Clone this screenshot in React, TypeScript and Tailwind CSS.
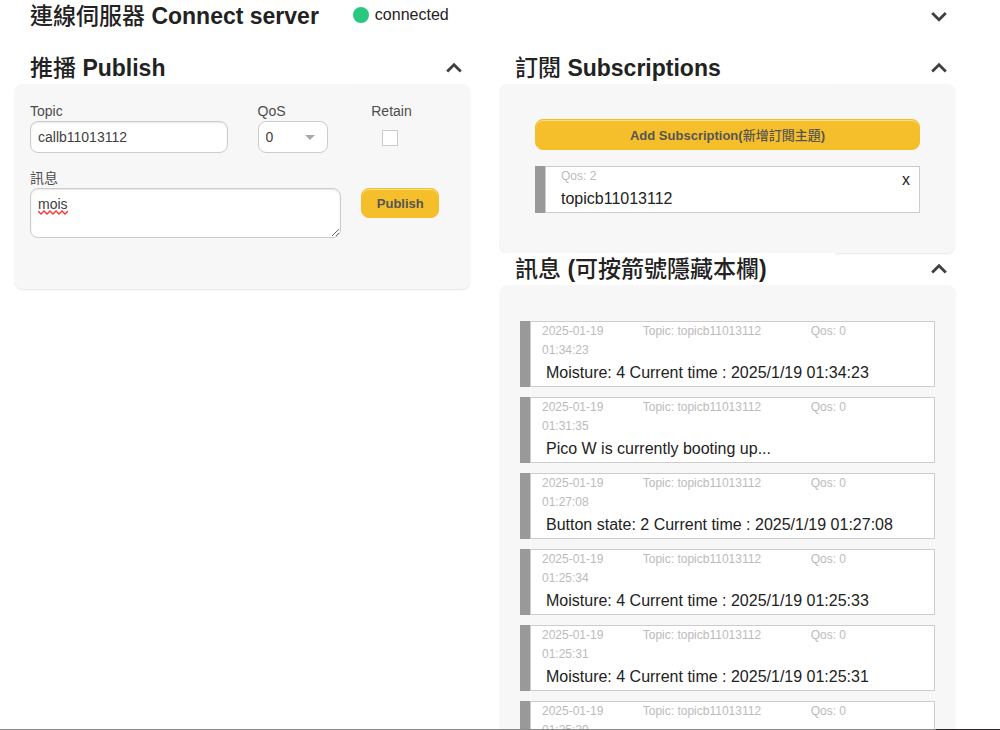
import { useState, type ReactNode } from "react";

interface Message {
  time: string;
  text: string;
}

const messages: Message[] = [
  { time: "01:34:23", text: "Moisture: 4 Current time : 2025/1/19 01:34:23" },
  { time: "01:31:35", text: "Pico W is currently booting up..." },
  { time: "01:27:08", text: "Button state: 2 Current time : 2025/1/19 01:27:08" },
  { time: "01:25:34", text: "Moisture: 4 Current time : 2025/1/19 01:25:33" },
  { time: "01:25:31", text: "Moisture: 4 Current time : 2025/1/19 01:25:31" },
  { time: "01:25:29", text: "Moisture: 4 Current time : 2025/1/19 01:25:28" },
];

function Han({ children }: { children: ReactNode }) {
  return <span className="font-medium">{children}</span>;
}

function Heading({ children }: { children: ReactNode }) {
  return <h2 className="text-[23px] leading-8 font-bold text-[#222]">{children}</h2>;
}

function Chevron({ up, label, onClick }: { up: boolean; label: string; onClick: () => void }) {
  return (
    <button type="button" aria-label={label} aria-expanded={up} onClick={onClick} className="cursor-pointer text-[#404040]">
      <svg width="16" height="16" viewBox="0 0 16 16" fill="none" stroke="currentColor" strokeWidth="2.8" className="block">
        <path d={up ? "M1.2 11.6 8 4.8 14.8 11.6" : "M1.2 4.9 8 11.7 14.8 4.9"} />
      </svg>
    </button>
  );
}

interface SectionProps {
  name: string;
  title: ReactNode;
  className: string;
  children: ReactNode;
}

function Section({ name, title, className, children }: SectionProps) {
  const [open, setOpen] = useState(true);
  return (
    <section>
      <div className="flex items-center justify-between pr-2">
        <div className="relative w-3/4 bg-white pl-[15px]">
          <Heading>{title}</Heading>
        </div>
        <Chevron up={open} label={name} onClick={() => setOpen(!open)} />
      </div>
      {open && (
        <div className={`rounded-lg bg-[#f7f7f7] shadow-[0_1px_2px_rgba(0,0,0,0.1)] ${className}`}>{children}</div>
      )}
    </section>
  );
}

const label = "block text-sm leading-5 text-[#4d4d4d]";
const field = "block w-full rounded-lg border border-[#ccc] bg-white px-[7px] text-sm text-[#404040]";
const button =
  "cursor-pointer rounded-lg border border-[#f5bd27] bg-[#f5bf2b] pt-0.5 text-[13px] font-bold text-[#555] shadow-[inset_0_1px_0_rgba(255,255,255,0.5)]";

function PublishForm() {
  return (
    <form className="pt-[17px] pb-[51px]" onSubmit={(e) => e.preventDefault()}>
      <div className="grid grid-cols-4">
        <div className="col-span-2 px-[15px]">
          <label htmlFor="topic" className={label}>Topic</label>
          <input
            id="topic"
            type="text"
            defaultValue="callb11013112"
            className={`${field} h-8 shadow-[inset_0_1px_2px_rgba(0,0,0,0.1)]`}
          />
        </div>
        <div className="px-[15px]">
          <label htmlFor="qos" className={label}>QoS</label>
          <div className="relative w-[70px]">
            <select id="qos" defaultValue="0" className={`${field} h-8 appearance-none`}>
              <option>0</option>
              <option>1</option>
              <option>2</option>
            </select>
            <svg width="10" height="5" viewBox="0 0 10 5" className="pointer-events-none absolute top-3.5 right-[13px] fill-[#aaa]">
              <path d="M0 0h10L5 5z" />
            </svg>
          </div>
        </div>
        <div className="px-[15px]">
          <label htmlFor="retain" className={label}>Retain</label>
          <input
            id="retain"
            type="checkbox"
            className="mt-[9px] ml-[11px] block size-4 appearance-none border border-[#ccc] bg-white checked:bg-[#999]"
          />
        </div>
      </div>
      <div className="mt-[15px] grid grid-cols-4">
        <div className="col-span-3 px-[15px]">
          <label htmlFor="message" className={label}>訊息</label>
          <div className="relative">
            <textarea
              id="message"
              spellCheck={false}
              defaultValue="mois"
              className={`${field} h-[50px] py-[5px] leading-5 shadow-[inset_0_1px_2px_rgba(0,0,0,0.1)]`}
            />
            <svg width="30" height="5" viewBox="0 0 30 5" fill="none" className="pointer-events-none absolute top-[22px] left-2 stroke-[#f33]">
              <path d="M0 1l3 3 3-3 3 3 3-3 3 3 3-3 3 3 3-3 3 3 3-3" strokeWidth="1.4" />
            </svg>
          </div>
        </div>
        <div className="pt-5 pl-[5px]">
          <button type="submit" className={`${button} h-[30px] w-[78px]`}>Publish</button>
        </div>
      </div>
    </form>
  );
}

function SubscriptionCard() {
  return (
    <div className="mt-4 flex border border-l-0 border-[#ccc] bg-white">
      <div className="-my-px w-[11px] border-r border-[#ccc] bg-[#999]" />
      <div className="flex-1 pl-[15px]">
        <div className="text-xs leading-[19px] text-[#bbb]">Qos: 2</div>
        <div className="text-base leading-[26px] text-[#222]">topicb11013112</div>
      </div>
      <button type="button" aria-label="Remove topicb11013112" className="cursor-pointer self-start pt-px pr-[9px] text-base leading-6 text-[#222]">
        x
      </button>
    </div>
  );
}

function MessageCard({ message }: { message: Message }) {
  return (
    <li className="flex border border-l-0 border-[#ccc] bg-white">
      <div className="-my-px w-[11px] border-r border-[#ccc] bg-[#999]" />
      <div className="flex-1">
        <div className="grid grid-cols-12 text-xs leading-[19px] text-[#bbb]">
          <div className="col-span-3 px-[11px]">2025-01-19 {message.time}</div>
          <div className="col-span-5 px-[11px]">Topic: topicb11013112</div>
          <div className="col-span-4 px-[11px]">Qos: 0</div>
        </div>
        <div className="pl-[15px] text-base leading-[26px] text-[#222]">{message.text}</div>
      </div>
    </li>
  );
}

export default function App() {
  const [connectOpen, setConnectOpen] = useState(false);
  return (
    <div className="flex h-screen flex-col bg-white font-['Liberation_Sans','Noto_Sans_CJK_TC',sans-serif] text-[#222]">
      <main className="min-h-0 flex-1 overflow-hidden pr-[45px] pl-[15px]">
        <header className="mb-5 flex items-center pr-2 pl-[15px]">
          <Heading><Han>連線伺服器</Han> Connect server</Heading>
          <div className="ml-[34px] flex flex-1 items-center gap-1.5 pb-0.5">
            <span className="size-4 rounded-full bg-[#29c77f]" />
            <span className="text-base leading-6">connected</span>
          </div>
          <Chevron up={connectOpen} label="Connect server" onClick={() => setConnectOpen(!connectOpen)} />
        </header>
        <div className="grid grid-cols-2 items-start gap-[30px]">
          <Section name="Publish" title={<><Han>推播</Han> Publish</>} className="">
            <PublishForm />
          </Section>
          <div>
            <Section name="Subscriptions" title={<><Han>訂閱</Han> Subscriptions</>} className="px-[35px] pt-[35px] pb-10">
              <button type="button" className={`${button} block h-[31px] w-full`}>
                Add Subscription(<Han>新增訂閱主題</Han>)
              </button>
              <SubscriptionCard />
            </Section>
            <Section name="訊息" title={<><Han>訊息</Han> (<Han>可按箭號隱藏本欄</Han>)</>} className="px-5 py-9">
              <ul className="flex flex-col gap-2.5">
                {messages.map((m) => (
                  <MessageCard key={m.time} message={m} />
                ))}
              </ul>
            </Section>
          </div>
        </div>
      </main>
      <div className="flex h-px">
        <div className="flex-1 bg-[#8a8a8a]" />
        <div className="w-16 bg-[#2b2426]" />
      </div>
    </div>
  );
}
